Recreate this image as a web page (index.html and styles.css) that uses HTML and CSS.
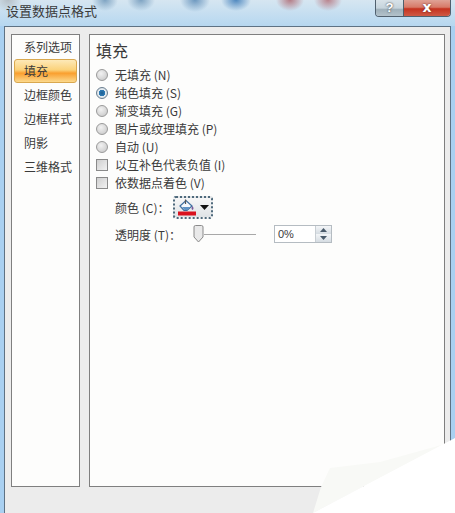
FILE: index.html
```html
<!DOCTYPE html>
<html lang="zh">
<head>
<meta charset="utf-8">
<title>设置数据点格式</title>
<link rel="stylesheet" href="styles.css">
</head>
<body>
<div class="window">
  <header class="titlebar">
    <span class="caption">设置数据点格式</span>
    <div class="controls">
      <span class="btn-help">?</span>
      <span class="btn-close">x</span>
    </div>
  </header>
  <main class="dialog">
    <nav class="list">
      <div class="item">系列选项</div>
      <div class="item active">填充</div>
      <div class="item">边框颜色</div>
      <div class="item">边框样式</div>
      <div class="item">阴影</div>
      <div class="item">三维格式</div>
    </nav>
    <section class="pane">
      <h1 class="heading">填充</h1>
      <div class="options">
        <label class="opt"><span class="radio"></span>无填充 (N)</label>
        <label class="opt"><span class="radio on"></span>纯色填充 (S)</label>
        <label class="opt"><span class="radio"></span>渐变填充 (G)</label>
        <label class="opt"><span class="radio"></span>图片或纹理填充 (P)</label>
        <label class="opt"><span class="radio"></span>自动 (U)</label>
        <label class="opt"><span class="check"></span>以互补色代表负值 (I)</label>
        <label class="opt"><span class="check"></span>依数据点着色 (V)</label>
      </div>
      <div class="color-row">
        <span class="field-label">颜色 (C)：</span>
        <span class="color-btn">
          <svg class="bucket" width="20" height="17" viewBox="0 0 20 17">
            <path d="M3 7 L9 1.500 L15 7 L10 11.500 H7 Z" fill="#f4f8fc" stroke="#3f6f9f" stroke-width="1.200"/>
            <path d="M5 8 H13.500 L10 11 H7.500 Z" fill="#5f93c6"/>
            <path d="M8.500 .5 V5" stroke="#555" stroke-width="1.200"/>
            <path d="M15.500 7 q2 2.500 0 4 q-2 -1.500 0 -4" fill="#7a5a9a"/>
            <rect x="1" y="12.500" width="18" height="4" fill="#d9121f"/>
          </svg>
          <svg class="caret" width="9" height="5" viewBox="0 0 9 5"><path d="M0 0 H9 L4.500 5 Z" fill="#111"/></svg>
        </span>
      </div>
      <div class="alpha-row">
        <span class="field-label alpha-label">透明度 (T)：</span>
        <div class="slider">
          <svg class="thumb" width="11" height="18" viewBox="0 0 11 18">
            <path d="M1 2 Q1 .5 2.500 .5 H8.500 Q10 .5 10 2 V12 L5.500 17 L1 12 Z" fill="#e9e9e9" stroke="#8a8a8a"/>
          </svg>
          <span class="track"></span>
        </div>
        <div class="spin">
          <span class="spin-value">0%</span>
          <span class="spin-btns">
            <span class="spin-btn"><svg width="7" height="4" viewBox="0 0 7 4"><path d="M0 4 L3.500 0 L7 4 Z" fill="#4a5a6a"/></svg></span>
            <span class="spin-btn"><svg width="7" height="4" viewBox="0 0 7 4"><path d="M0 0 H7 L3.500 4 Z" fill="#4a5a6a"/></svg></span>
          </span>
        </div>
      </div>
    </section>
  </main>
  <div class="curl-shade"></div>
  <div class="curl"></div>
</div>
</body>
</html>
```

FILE: styles.css
```css
* { box-sizing: border-box; }
html, body { margin: 0; padding: 0; }
body {
  width: 455px;
  height: 513px;
  overflow: hidden;
  font-family: "Noto Sans CJK SC", "Liberation Sans", sans-serif;
  font-size: 12px;
  color: #3a3a3a;
}
.window {
  position: relative;
  width: 455px;
  height: 513px;
  display: flex;
  flex-direction: column;
  background: #a9d0f1;
}
.titlebar {
  height: 26px;
  flex: none;
  display: flex;
  justify-content: space-between;
  align-items: flex-start;
  padding-left: 6px;
  background:
    radial-gradient(ellipse 13px 11px at 105px 0, #7ea3c2, transparent),
    radial-gradient(ellipse 14px 11px at 141px 0, #7ea3c2, transparent),
    radial-gradient(ellipse 15px 12px at 195px 0, #6d98bf, transparent),
    radial-gradient(ellipse 15px 11px at 236px 0, #4f88bf, transparent),
    radial-gradient(ellipse 14px 11px at 290px 0, #b47c86, transparent),
    radial-gradient(ellipse 14px 11px at 328px 0, #b9848e, transparent),
    radial-gradient(ellipse 14px 12px at 8px 0, #b5bfc6, transparent),
    linear-gradient(#d6e6f1, #b6d7f0);
}
.caption {
  font-size: 13px;
  line-height: 14px;
  margin-top: 4px;
  color: #3a3a3a;
}
.controls {
  display: flex;
  height: 17px;
  margin-right: 4px;
  border: 1px solid #50606e;
  border-top: 0;
  border-radius: 0 0 4px 4px;
  overflow: hidden;
}
.btn-help {
  width: 28px;
  text-align: center;
  font: bold 13px/15px "Liberation Sans", sans-serif;
  color: #fff;
  text-shadow: 0 0 2px #222;
  background: linear-gradient(#d8e2e8, #c6d4dc 50%, #9fb0ba 60%, #b3c2cb);
  border-right: 1px solid #4f5f6b;
}
.btn-close {
  width: 46px;
  text-align: center;
  font: bold 14px/14px "DejaVu Sans", sans-serif;
  color: #fff;
  text-shadow: 0 0 2px #522;
  background: linear-gradient(#dfa296, #d77a68 45%, #c5321f 55%, #cf5a45);
}
.dialog {
  flex: 1;
  margin: 0 4px;
  padding: 7px 5px 26px 6px;
  display: flex;
  gap: 9px;
  background: #ececec;
  border: 1px solid #5e7284;
  border-bottom: 0;
}
.list {
  width: 69px;
  flex: none;
  padding: 0 2px;
  background: #fdfdfc;
  border: 1px solid #7f7f7f;
}
.item {
  height: 24px;
  padding-left: 10px;
  line-height: 24px;
}
.active {
  border: 1px solid #d9a84f;
  border-radius: 3px;
  line-height: 22px;
  padding-left: 9px;
  background: linear-gradient(#fde9b8, #fbd27a 45%, #fa9f2f 60%, #fcd98c);
}
.pane {
  flex: 1;
  padding: 3px 6px;
  background: #fdfdfc;
  border: 1px solid #7f7f7f;
}
.heading {
  margin: 0 0 4px;
  font-size: 16px;
  font-weight: 400;
  line-height: 24px;
}
.options {
  display: flex;
  flex-direction: column;
}
.opt {
  height: 18px;
  display: flex;
  align-items: center;
  gap: 7px;
  line-height: 18px;
  white-space: pre;
}
.radio {
  width: 12px;
  height: 12px;
  flex: none;
  border-radius: 50%;
  border: 1px solid #9a9a9a;
  background: radial-gradient(circle at 40% 35%, #f2f2f2, #c4c4c4);
}
.radio.on {
  border-color: #6b7f90;
  background: radial-gradient(circle, #1f5f92 0, #2f7cb5 3px, #e6edf2 3.500px, #c6ced4);
}
.check {
  width: 12px;
  height: 12px;
  flex: none;
  border: 1px solid #8a8a8a;
  background: linear-gradient(135deg, #cfcfcf, #f2f2f2);
}
.color-row {
  display: flex;
  align-items: center;
  height: 23px;
  margin-top: 4px;
  padding-left: 19px;
}
.field-label {
  width: 58px;
  flex: none;
  white-space: pre;
}
.alpha-label { width: 78px; }
.color-btn {
  width: 40px;
  height: 23px;
  display: flex;
  align-items: center;
  gap: 3px;
  padding-left: 2px;
  border: 2px dotted #4f6a7c;
  border-radius: 3px;
  background: linear-gradient(#f7f7f7, #dfe3e6);
}
.bucket { flex: none; }
.caret { flex: none; }
.alpha-row {
  display: flex;
  align-items: center;
  height: 18px;
  margin-top: 6px;
  padding-left: 19px;
}
.slider {
  width: 63px;
  flex: none;
  display: flex;
  align-items: center;
}
.thumb { flex: none; }
.track {
  flex: 1;
  height: 1px;
  background: #a8a8a8;
}
.spin {
  width: 58px;
  height: 18px;
  margin-left: 18px;
  display: flex;
  justify-content: space-between;
  border: 1px solid #b5bcc2;
  background: #fff;
}
.spin-value {
  padding-left: 3px;
  font: 11px/16px "Liberation Sans", sans-serif;
}
.spin-btns {
  width: 16px;
  display: flex;
  flex-direction: column;
  border-left: 1px solid #c8ced3;
}
.spin-btn {
  flex: 1;
  display: flex;
  align-items: center;
  justify-content: center;
  background: linear-gradient(#f4f6f8, #d5dce2);
}
.curl-shade {
  position: absolute;
  inset: 0;
  pointer-events: none;
  background: #f8f9f6;
  clip-path: polygon(321px 487px, 330px 468px, 380px 462px, 445px 444px, 313px 513px);
}
.curl {
  position: absolute;
  inset: 0;
  pointer-events: none;
  background: #fff;
  clip-path: polygon(313px 513px, 455px 438px, 455px 513px);
}
```
